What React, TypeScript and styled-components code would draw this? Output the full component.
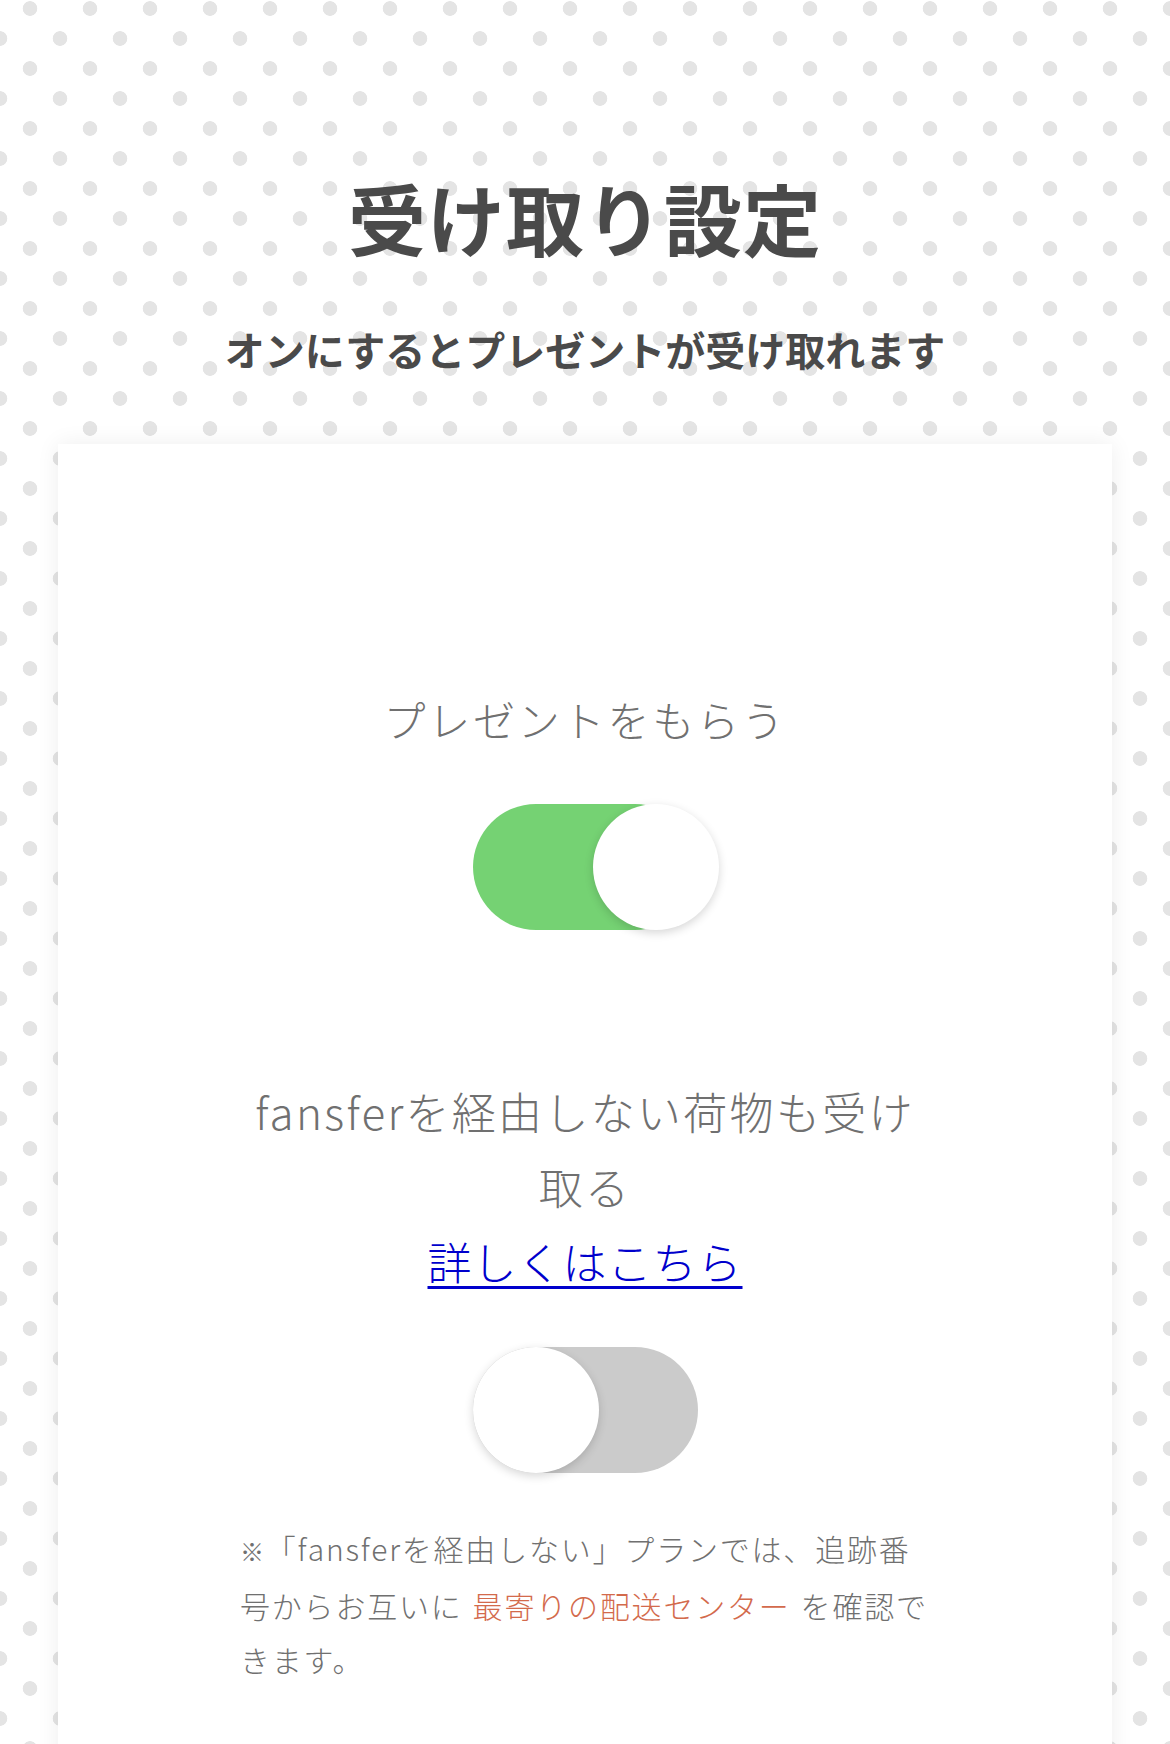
import React from "react";
import styled, { createGlobalStyle } from "styled-components";

const GlobalStyle = createGlobalStyle`
  html, body {
    margin: 0;
    padding: 0;
  }
  body {
    font-family: "Noto Sans CJK JP", "Noto Sans", sans-serif;
    background-color: #ffffff;
    background-image:
      radial-gradient(circle at 30px 8.5px, #e4e4e4 0, #e4e4e4 7px, transparent 7.6px),
      radial-gradient(circle at 0px 38.5px, #e4e4e4 0, #e4e4e4 7px, transparent 7.6px),
      radial-gradient(circle at 60px 38.5px, #e4e4e4 0, #e4e4e4 7px, transparent 7.6px);
    background-size: 60px 60px;
    background-repeat: repeat;
  }
`;

const Page = styled.div`
  display: flex;
  flex-direction: column;
  align-items: stretch;
  padding-top: 170px;
  min-height: 1744px;
  box-sizing: border-box;
  overflow: hidden;
`;

const Header = styled.header`
  display: flex;
  flex-direction: column;
  align-items: center;
  gap: 57px;
  margin-bottom: 67px;
`;

const Title = styled.h1`
  margin: 0;
  font-size: 78px;
  line-height: 94px;
  font-weight: 700;
  color: #4a4a4a;
  letter-spacing: 1px;
`;

const Subtitle = styled.p`
  margin: 0;
  font-size: 40px;
  line-height: 56px;
  font-weight: 700;
  color: #4a4a4a;
`;

const Card = styled.main`
  margin: 0 58px;
  background: #ffffff;
  box-shadow: 0 0 22px rgba(0, 0, 0, 0.07);
  padding: 237px 0 200px;
  display: flex;
  flex-direction: column;
  align-items: center;
  gap: 144px;
  flex: 1;
`;

const Section = styled.section`
  width: 690px;
  display: flex;
  flex-direction: column;
  align-items: center;
  gap: 48px;
`;

const Label = styled.div`
  font-size: 42px;
  line-height: 75px;
  font-weight: 300;
  color: #707070;
  letter-spacing: 2.8px;
  text-align: center;
`;

const Heading = styled.div`
  font-size: 44px;
  line-height: 75px;
  font-weight: 300;
  color: #707070;
  text-align: center;
  width: 690px;
  letter-spacing: 2.3px;
`;

const DetailLink = styled.a`
  display: block;
  color: #0000cc;
  letter-spacing: 1px;
  text-decoration: underline;
  text-underline-offset: 6px;
  text-decoration-thickness: 3px;
`;

const Track = styled.div<{ $on: boolean }>`
  position: relative;
  align-self: flex-start;
  margin-left: 233px;
  width: 225px;
  height: 126px;
  border-radius: 63px;
  background: ${(p) => (p.$on ? "#75d273" : "#cbcbcb")};
`;

const Knob = styled.span<{ $on: boolean }>`
  position: absolute;
  top: 0;
  left: ${(p) => (p.$on ? "120px" : "0px")};
  width: 126px;
  height: 126px;
  border-radius: 50%;
  background: #ffffff;
  box-shadow: 0 3px 10px rgba(0, 0, 0, 0.16);
`;

const Note = styled.p`
  margin: 0;
  align-self: stretch;
  font-size: 30px;
  line-height: 54px;
  font-weight: 300;
  color: #707070;
  text-align: left;
  letter-spacing: 1.8px;
`;

const Mark = styled.span`
  font-size: 24px;
`;

const Accent = styled.span`
  color: #d36a4c;
  margin: 0 10px;
`;

function Toggle({ on }: { on: boolean }) {
  return (
    <Track $on={on} role="switch" aria-checked={on}>
      <Knob $on={on} />
    </Track>
  );
}

export default function App() {
  return (
    <>
      <GlobalStyle />
      <Page>
        <Header>
          <Title>受け取り設定</Title>
          <Subtitle>オンにするとプレゼントが受け取れます</Subtitle>
        </Header>
        <Card>
          <Section>
            <Label>プレゼントをもらう</Label>
            <Toggle on={true} />
          </Section>
          <Section>
            <Heading>
              fansferを経由しない荷物も受け取る
              <DetailLink href="#">詳しくはこちら</DetailLink>
            </Heading>
            <Toggle on={false} />
            <Note>
              <Mark>※</Mark>「fansferを経由しない」プランでは、追跡番号からお互いに
              <Accent>最寄りの配送センター</Accent>を確認できます。
            </Note>
          </Section>
        </Card>
      </Page>
    </>
  );
}
